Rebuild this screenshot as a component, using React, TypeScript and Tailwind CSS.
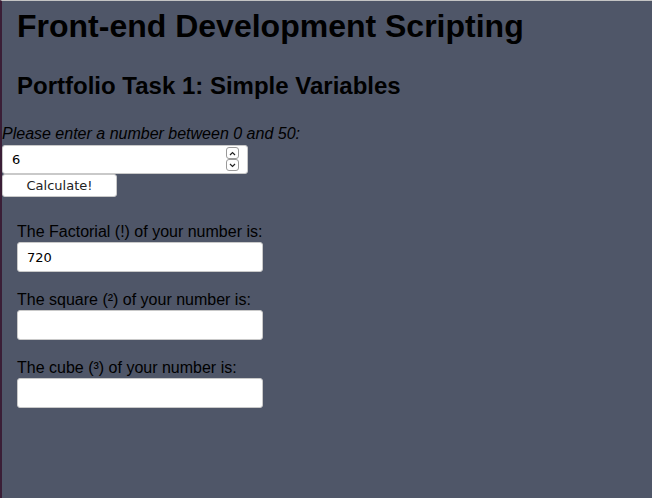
import { useState } from 'react';

function SpinButtons() {
  return (
    <div className="absolute right-[9px] top-[2px] flex flex-col">
      <div className="flex h-[12px] w-[13px] items-center justify-center rounded-[3px] border border-[#9a9a9a] bg-white">
        <svg width="7" height="5" viewBox="0 0 7 5" fill="none" stroke="#222" strokeWidth="1.2">
          <path d="M1 4 L3.5 1.5 L6 4" />
        </svg>
      </div>
      <div className="flex h-[12px] w-[13px] items-center justify-center rounded-[3px] border border-[#9a9a9a] bg-white">
        <svg width="7" height="5" viewBox="0 0 7 5" fill="none" stroke="#222" strokeWidth="1.2">
          <path d="M1 1 L3.5 3.5 L6 1" />
        </svg>
      </div>
    </div>
  );
}

function ResultField({ label, value }: { label: string; value: string }) {
  return (
    <div className="flex flex-col">
      <label className="text-[16px] leading-[19px] text-black">{label}</label>
      <input
        readOnly
        value={value}
        className="mt-[1px] h-[30px] w-[246px] rounded-[3px] border border-[#c9c9c9] bg-white px-[9px] font-['DejaVu_Sans',sans-serif] text-[13px] text-black outline-none"
      />
    </div>
  );
}

export default function App() {
  const [num, setNum] = useState('6');

  return (
    <div className="min-h-[498px] border-l-2 border-t border-l-[#3a1e36] border-t-[#c4c4c4] bg-[#4f5668] font-['Liberation_Sans',Arial,sans-serif] text-black">
      <h1 className="ml-[15px] pt-[7px] text-[32px] font-bold leading-[37px]">Front-end Development Scripting</h1>
      <h2 className="ml-[15px] mt-[27px] text-[24px] font-bold leading-[28px]">Portfolio Task 1: Simple Variables</h2>

      <form className="mt-[24px] flex flex-col items-start" onSubmit={(e) => e.preventDefault()}>
        <label className="text-[16px] italic leading-[19px]">Please enter a number between 0 and 50:</label>
        <div className="relative mt-[2px]">
          <input
            value={num}
            onChange={(e) => setNum(e.target.value)}
            className="h-[29px] w-[246px] rounded-[3px] border border-[#c9c9c9] bg-white px-[9px] font-['DejaVu_Sans',sans-serif] text-[13px] text-black outline-none"
          />
          <SpinButtons />
        </div>
        <button
          type="submit"
          className="h-[23px] w-[115px] rounded-[3px] border border-[#c9c9c9] bg-white font-['DejaVu_Sans',sans-serif] text-[13px] leading-[21px] text-[#222]"
        >
          Calculate!
        </button>
      </form>

      <div className="mt-[25px] flex flex-col gap-[18px] pl-[15px]">
        <ResultField label="The Factorial (!) of your number is:" value="720" />
        <ResultField label="The square (²) of your number is:" value="" />
        <ResultField label="The cube (³) of your number is:" value="" />
      </div>
    </div>
  );
}
